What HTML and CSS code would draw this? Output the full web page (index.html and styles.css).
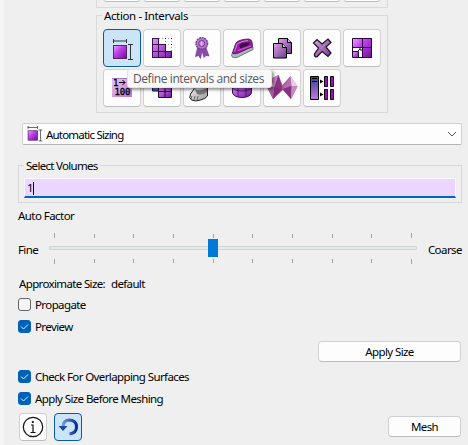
FILE: index.html
```html
<!DOCTYPE html>
<html lang="en">
<head>
<meta charset="utf-8">
<title>Mesh Intervals</title>
<link rel="stylesheet" href="styles.css">
</head>
<body>
<svg class="defs" aria-hidden="true">
  <defs>
    <linearGradient id="p" x1="0" y1="0" x2="1" y2="1"><stop offset="0" stop-color="#dda0ee"/><stop offset=".5" stop-color="#b352d8"/><stop offset="1" stop-color="#6a1c92"/></linearGradient>
    <linearGradient id="v" x1="0" y1="0" x2="1" y2="1"><stop offset="0" stop-color="#f0a8ff"/><stop offset=".4" stop-color="#c040f0"/><stop offset="1" stop-color="#6a0f96"/></linearGradient>
    <linearGradient id="m" x1="0" y1="0" x2="1" y2="1"><stop offset="0" stop-color="#d9a3e2"/><stop offset="1" stop-color="#703a90"/></linearGradient>
    <linearGradient id="l" x1="0" y1="0" x2="1" y2="1"><stop offset="0" stop-color="#efc6f8"/><stop offset="1" stop-color="#b478cc"/></linearGradient>
    <linearGradient id="b" x1="0" y1="0" x2="0" y2="1"><stop offset="0" stop-color="#3b3f9c"/><stop offset="1" stop-color="#c078dc"/></linearGradient>
    <linearGradient id="g" x1="0" y1="0" x2="1" y2="1"><stop offset="0" stop-color="#fff"/><stop offset="1" stop-color="#999"/></linearGradient>
    <linearGradient id="u" x1="0" y1="0" x2="1" y2="0"><stop offset="0" stop-color="#6f98d8"/><stop offset="1" stop-color="#052d91"/></linearGradient>
    <symbol id="sizing" viewBox="9 10 22 22">
      <path d="M10.500 10v4M23.500 10v4M10 12h14M25 15.500h5M25 30.500h5M27.500 15.500v15" stroke="#333" fill="none"/>
      <rect x="10.500" y="16.500" width="13" height="13" fill="url(#v)" stroke="#552366"/>
    </symbol>
  </defs>
</svg>
<main class="panel">
  <section class="group previous"><div class="tools">
    <span class="tool"></span><span class="tool"></span><span class="tool"></span><span class="tool"></span><span class="tool"></span><span class="tool"></span><span class="tool"></span>
  </div></section>

  <section class="group actions">
    <h2 class="legend wide">Action - Intervals</h2>
    <div class="tools">
      <button class="tool active"><svg viewBox="0 0 38 38"><use href="#sizing" x="9" y="10" width="22" height="22"/></svg></button>
      <button class="tool"><svg viewBox="0 0 38 38"><path d="M9 9h7v7h6v7h7v6H9z" fill="url(#p)"/><path d="M9.500 9v20M15.500 9v20M22.500 16v13M9 9.500h7M9 15.500h13M9 22.500h20M9 28.500h20M28.500 22v7" stroke="#38104c" fill="none"/><path d="M16 9.500h13M22 15.500h7M22.500 9v7M28.500 9v14" stroke="#999" stroke-dasharray="1 2" fill="none"/><path d="M22 9h1v1h-1zM28 9h1v1h-1zM28 15h1v1h-1zM22 15h1v1h-1z"/></svg></button>
      <button class="tool"><svg viewBox="0 0 38 38"><path d="M14.500 19l-2 8.500 3-1 2 3 1.500-8 2 7 2-2 3 .5-3-8z" fill="#8e4aae" stroke="#6b3688" stroke-width=".7"/><circle cx="18.800" cy="14.500" r="5.700" fill="#b87bd0" stroke="#7b409c" stroke-width="1.600" stroke-dasharray="2 .6"/><circle cx="18.800" cy="14.500" r="3" fill="#c990dc" stroke="#70358c"/><path d="M18.500 12.500v4" stroke="#e5c9ef"/></svg></button>
      <button class="tool"><svg viewBox="0 0 38 38"><path d="M8.500 26.500l1-3 20.500-5.500v2.500L14 28.500q-5 .8-5.500-2z" fill="#a9bbb9" stroke="#55605f" stroke-width=".8"/><path d="M9.500 24l3-9q1-2.500 4-3.500 5-1.500 9-1.500 3 .5 3.500 3l.5 4.500-14 6.500q-5 1.500-6 0z" fill="#9620a5" stroke="#4a1252" stroke-width=".9"/><path d="M16 16.500q2-3.500 11-3l-1 2.500-9 3.500z" fill="#3c0b45"/><path d="M11.500 22.500l2.500-7.500q4-3 11-3.500" fill="none" stroke="#de7aec"/><path d="M15 21.500l13-4.500" stroke="#cf55dc"/></svg></button>
      <button class="tool"><svg viewBox="0 0 38 38"><path d="M15.500 9.500h9l4 4v11h-13z" fill="url(#m)" stroke="#000"/><path d="M24.500 9.500v4h4" fill="#ddb0e5" stroke="#000"/><path d="M10.500 14.500h9l4 4v10.500h-13z" fill="url(#m)" stroke="#000"/><path d="M19.500 14.500v4h4" fill="#ddb0e5" stroke="#000"/></svg></button>
      <button class="tool"><svg viewBox="0 0 38 38"><path d="M10.500 14l3.500-3.500 5 4.500 6-5 3 3.500-5 4.500 5 6-3 3.500-6-5-5 5.500q-3 0-2.500-3l4-6z" fill="url(#m)" stroke="#1c1022" stroke-width="1.200"/></svg></button>
      <button class="tool"><svg viewBox="0 0 38 38"><path d="M9 9h20v20H9z" fill="url(#v)"/><path d="M9 19h10v10H9z" fill="#fff"/><path d="M10 23h5v6h-5z" fill="url(#p)"/><path d="M9.500 9.500h19v19h-19zM19.500 9v20M9 18.500h20M10 22.500h5.500V29" stroke="#270435" fill="none"/><path d="M15 22l2-2M16 20h2v2" stroke="#111" fill="none"/></svg></button>

      <button class="tool"><svg viewBox="0 0 38 38"><path d="M9 9h20v19H9z" fill="url(#l)"/><path d="M9 9.500h20" stroke="#a67bb3"/><text class="digits" x="10" y="17">1</text><path d="M16 13.500h6M19.500 11l2.500 2.500-2.500 2.500" stroke="#000" fill="none"/><text class="digits" x="11.500" y="26" textLength="16">100</text></svg></button>
      <button class="tool"><svg viewBox="0 0 38 38"><path d="M9.500 9.500h13v12.500h-13z" fill="#5567b3" stroke="#111944"/><path d="M15.500 15.500h13v13h-13z" fill="url(#p)" stroke="#290638"/><path d="M22 15v14M15 22.500h14" stroke="#290638"/></svg></button>
      <button class="tool"><svg viewBox="0 0 38 38"><path d="M12 10l-1 10-3.500 5q-2 4 1 6 4 2 9 0 5-1 7-4V10z" fill="url(#g)" stroke="#222"/><path d="M12 20q5 3 12-1v4q-5 4-10 2z" fill="#777"/><path d="M9 27l-1 3M12 27l-1 4M15 27l-1 4" fill="none" stroke="#666"/></svg></button>
      <button class="tool"><svg viewBox="0 0 38 38"><path d="M9.500 12v12q2 4.500 9.500 4.500t9.500-4.500V12z" fill="url(#p)" stroke="#43105c"/><path d="M9.500 18q2 4 9.500 4t9.500-4M15 12v16M23 12v16" fill="none" stroke="#43105c" stroke-width=".8"/></svg></button>
      <button class="tool"><svg viewBox="0 0 38 38"><path d="M3.500 17l4-7L15.500 6l4 10 8-9 7 10.500L28 30l-8-9-10 9z" fill="#a9579f"/><path d="M7.500 10l8-4-4 12z" fill="#c680c0"/><path d="M3.500 17l4-7 4 8z" fill="#e9cbe6"/><path d="M15.500 6l4 14-8-2z" fill="#8a347f"/><path d="M3.500 17l8 1L10 30z" fill="#a45c9f"/><path d="M11.500 18l8 2L10 30z" fill="#812b78"/><path d="M27.500 7l-8 13 9-3z" fill="#b76bb0"/><path d="M27.500 7l7 10.500-6-.5z" fill="#eccde8"/><path d="M19.500 20l9-3-.5 13z" fill="#85347f"/><path d="M34.500 17.500l-6-.5-.5 13z" fill="#c78bc2"/></svg></button>
      <button class="tool"><svg viewBox="0 0 38 38"><path d="M7.500 7.500h8v23h-8z" fill="url(#b)" stroke="#000"/><path d="M9 9.500h5M9 12.500h5" stroke="#000"/><path d="M21.500 7.500h3v10h-3zM27.500 7.500h3v10h-3zM21.500 20.500h3v10h-3zM27.500 20.500h3v10h-3z" fill="#ae00d4" stroke="#000"/><path d="M17 10.500l3.500 2-3.500 2zM17 23.500l3.500 2-3.500 2z"/></svg></button>
    </div>
    <div class="tooltip">Define intervals and sizes</div>
  </section>

  <div class="combo">
    <svg class="combo-icon" viewBox="0 0 22 22"><use href="#sizing" width="22" height="22"/></svg>
    <span class="combo-text">Automatic Sizing</span>
    <svg class="chevron" viewBox="0 0 10 6"><path d="M1 1l4 4 4-4" fill="none" stroke="#555"/></svg>
  </div>

  <section class="group volumes">
    <h2 class="legend">Select Volumes</h2>
    <div class="entry">1<i class="caret"></i></div>
  </section>

  <div class="factor">Auto Factor</div>
  <div class="slider-row">
    <span class="fine">Fine</span>
    <div class="slider">
      <div class="ticks upper"><i></i><i></i><i></i><i></i><i></i><i></i><i></i><i></i><i></i><i></i></div>
      <div class="track"><b class="thumb"></b></div>
      <div class="ticks lower"><i></i><i></i><i></i><i></i><i></i><i></i><i></i><i></i><i></i><i></i></div>
    </div>
    <span class="coarse">Coarse</span>
  </div>
  <div class="approx"><span>Approximate Size:</span><span>default</span></div>
  <label class="check"><i class="box"></i><span>Propagate</span></label>
  <label class="check"><i class="box on"><svg viewBox="0 0 13 13"><path d="M3 6.500l2.500 2.500L10 4.500"/></svg></i><span>Preview</span></label>
  <div class="apply-row"><button class="push apply">Apply Size</button></div>
  <label class="check"><i class="box on"><svg viewBox="0 0 13 13"><path d="M3 6.500l2.500 2.500L10 4.500"/></svg></i><span>Check For Overlapping Surfaces</span></label>
  <label class="check"><i class="box on"><svg viewBox="0 0 13 13"><path d="M3 6.500l2.500 2.500L10 4.500"/></svg></i><span>Apply Size Before Meshing</span></label>
  <footer class="footer">
    <button class="tool small"><svg viewBox="0 0 28 28"><circle cx="14" cy="14" r="9.700" fill="none" stroke="#111" stroke-width="1.200"/><path d="M12 12h2v7M11.500 19.500h5" fill="none" stroke="#111" stroke-width="1.200"/><circle cx="13.800" cy="9" r="1.100"/></svg></button>
    <button class="tool small active"><svg viewBox="0 0 28 28"><path d="M9 14q0-7 6.500-7 7 .5 7 7 0 6-7 7" fill="none" stroke="url(#u)" stroke-width="3"/><path d="M4.500 13h9L9 18z" fill="#1c489f"/></svg></button>
    <button class="push mesh">Mesh</button>
  </footer>
</main>
</body>
</html>
```
FILE: styles.css
```css
* { box-sizing: border-box; }
body {
  margin: 0;
  width: 468px;
  height: 445px;
  overflow: hidden;
  background: #efefef;
  color: #000;
  font: 11.500px/16px "Noto Sans", sans-serif;
  letter-spacing: -0.6px;
}
button { font: inherit; letter-spacing: inherit; color: inherit; padding: 0; margin: 0; }
.defs { position: absolute; width: 0; height: 0; }
.panel {
  display: flex;
  flex-direction: column;
  height: 445px;
  padding: 0 6px 0 14px;
  border-left: 4px solid #f6f6f6;
}
.group { position: relative; border: 1px solid #d9d9d9; flex: none; }
.legend {
  position: absolute;
  top: -8px;
  left: 5px;
  margin: 0;
  padding: 0 2px;
  background: #efefef;
  font-size: inherit;
  font-weight: normal;
  line-height: 16px;
  letter-spacing: -0.7px;
  white-space: nowrap;
}
.wide { letter-spacing: -0.38px; }
.previous, .actions { width: 292px; margin-left: 78px; padding-left: 6px; }
.previous { height: 8px; border-top: 0; overflow: hidden; display: flex; align-items: flex-end; padding-bottom: 5px; }
.actions { height: 98px; margin-top: 7px; padding-top: 13px; }
.tools { display: grid; grid-template-columns: repeat(7, 38px); gap: 2px; }
.tool {
  width: 38px;
  height: 38px;
  border: 1px solid #d0d0d0;
  border-bottom-color: #bdbdbd;
  border-radius: 4px;
  background: #fdfdfd;
}
.tool svg { display: block; width: 38px; height: 38px; margin: -1px; }
.tool.active { background: #cce4f7; border-color: #0a5ba5; }
.digits { font: 9px "DejaVu Sans Mono", monospace; letter-spacing: 0; stroke: #000; stroke-width: .3; }
.tooltip {
  position: absolute;
  left: 30px;
  top: 53px;
  width: 145px;
  height: 19px;
  padding-left: 5px;
  border: 1px solid #e4e4e4;
  border-radius: 3px;
  background: #f9f9f9;
  box-shadow: 2px 2px 3px rgba(0, 0, 0, .4);
  color: #575757;
  font: 12px/18px "Open Sans", sans-serif;
  letter-spacing: -0.42px;
  white-space: nowrap;
}
.combo {
  display: flex;
  align-items: center;
  height: 22px;
  margin: 10px 0 0 4px;
  padding: 0 4px;
  border: 1px solid #d0d0d0;
  border-bottom-color: #b5b5b5;
  border-radius: 2px;
  background: #fdfdfd;
}
.combo-icon { width: 16px; height: 16px; margin-right: 3px; }
.combo-text { padding-top: 1px; letter-spacing: -0.8px; }
.chevron { width: 10px; height: 6px; margin-left: auto; }
.volumes { height: 38px; margin-top: 20px; padding: 12px 5px 0; }
.entry {
  display: flex;
  align-items: center;
  height: 20px;
  padding: 1px 0 0 2px;
  border: 1px solid #fafafa;
  border-bottom: 2px solid #0067c0;
  background: #ead6ff;
}
.caret { width: 1px; height: 13px; background: #000; }
.factor { margin-top: 5px; height: 16px; letter-spacing: -0.55px; }
.slider-row { display: flex; height: 33px; margin-top: 8px; }
.fine { width: 31px; padding-top: 10px; }
.coarse { margin-left: 11px; padding-top: 10px; letter-spacing: -0.55px; }
.slider { width: 368px; padding-top: 1px; }
.ticks { display: flex; justify-content: space-between; width: 358px; height: 5px; margin-left: 5px; }
.ticks i { width: 1px; height: 4px; background: #a4a394; }
.ticks i:first-child, .ticks i:last-child { height: 5px; }
.upper { align-items: flex-end; }
.track { height: 4px; margin: 8px 0 9px; border: 1px solid #d0d6d3; background: #e6eae9; position: relative; }
.thumb { position: absolute; left: 158px; top: -8px; width: 10px; height: 18px; background: #0078d7; }
.approx { display: flex; gap: 6px; margin: 11px 0 6px 1px; letter-spacing: -0.64px; }
.check { display: flex; align-items: center; gap: 4px; height: 22px; }
.approx + .check { margin-top: -4px; }
.box { width: 13px; height: 13px; margin-bottom: 1px; border: 1px solid #666; border-radius: 3px; background: #f5f5f5; }
.box svg { display: block; margin: -1px; width: 13px; height: 13px; }
.box path { fill: none; stroke: #e5f1ff; }
.box.on { background: #0061b8; border-color: #0061b8; }
.apply-row { display: flex; justify-content: flex-end; height: 28px; padding: 3px 1px 0; }
.push {
  height: 21px;
  padding-top: 1px;
  border: 1px solid #d0d0d0;
  border-bottom-color: #bdbdbd;
  border-radius: 4px;
  background: #fdfdfd;
  line-height: 18px;
}
.apply { width: 143px; }
.mesh { width: 73px; margin: 0 0 2px auto; }
.footer { display: flex; align-items: center; gap: 7px; padding: 0 1px; height: 28px; margin-top: 3px; }
.small, .small svg { width: 28px; height: 28px; }
```
